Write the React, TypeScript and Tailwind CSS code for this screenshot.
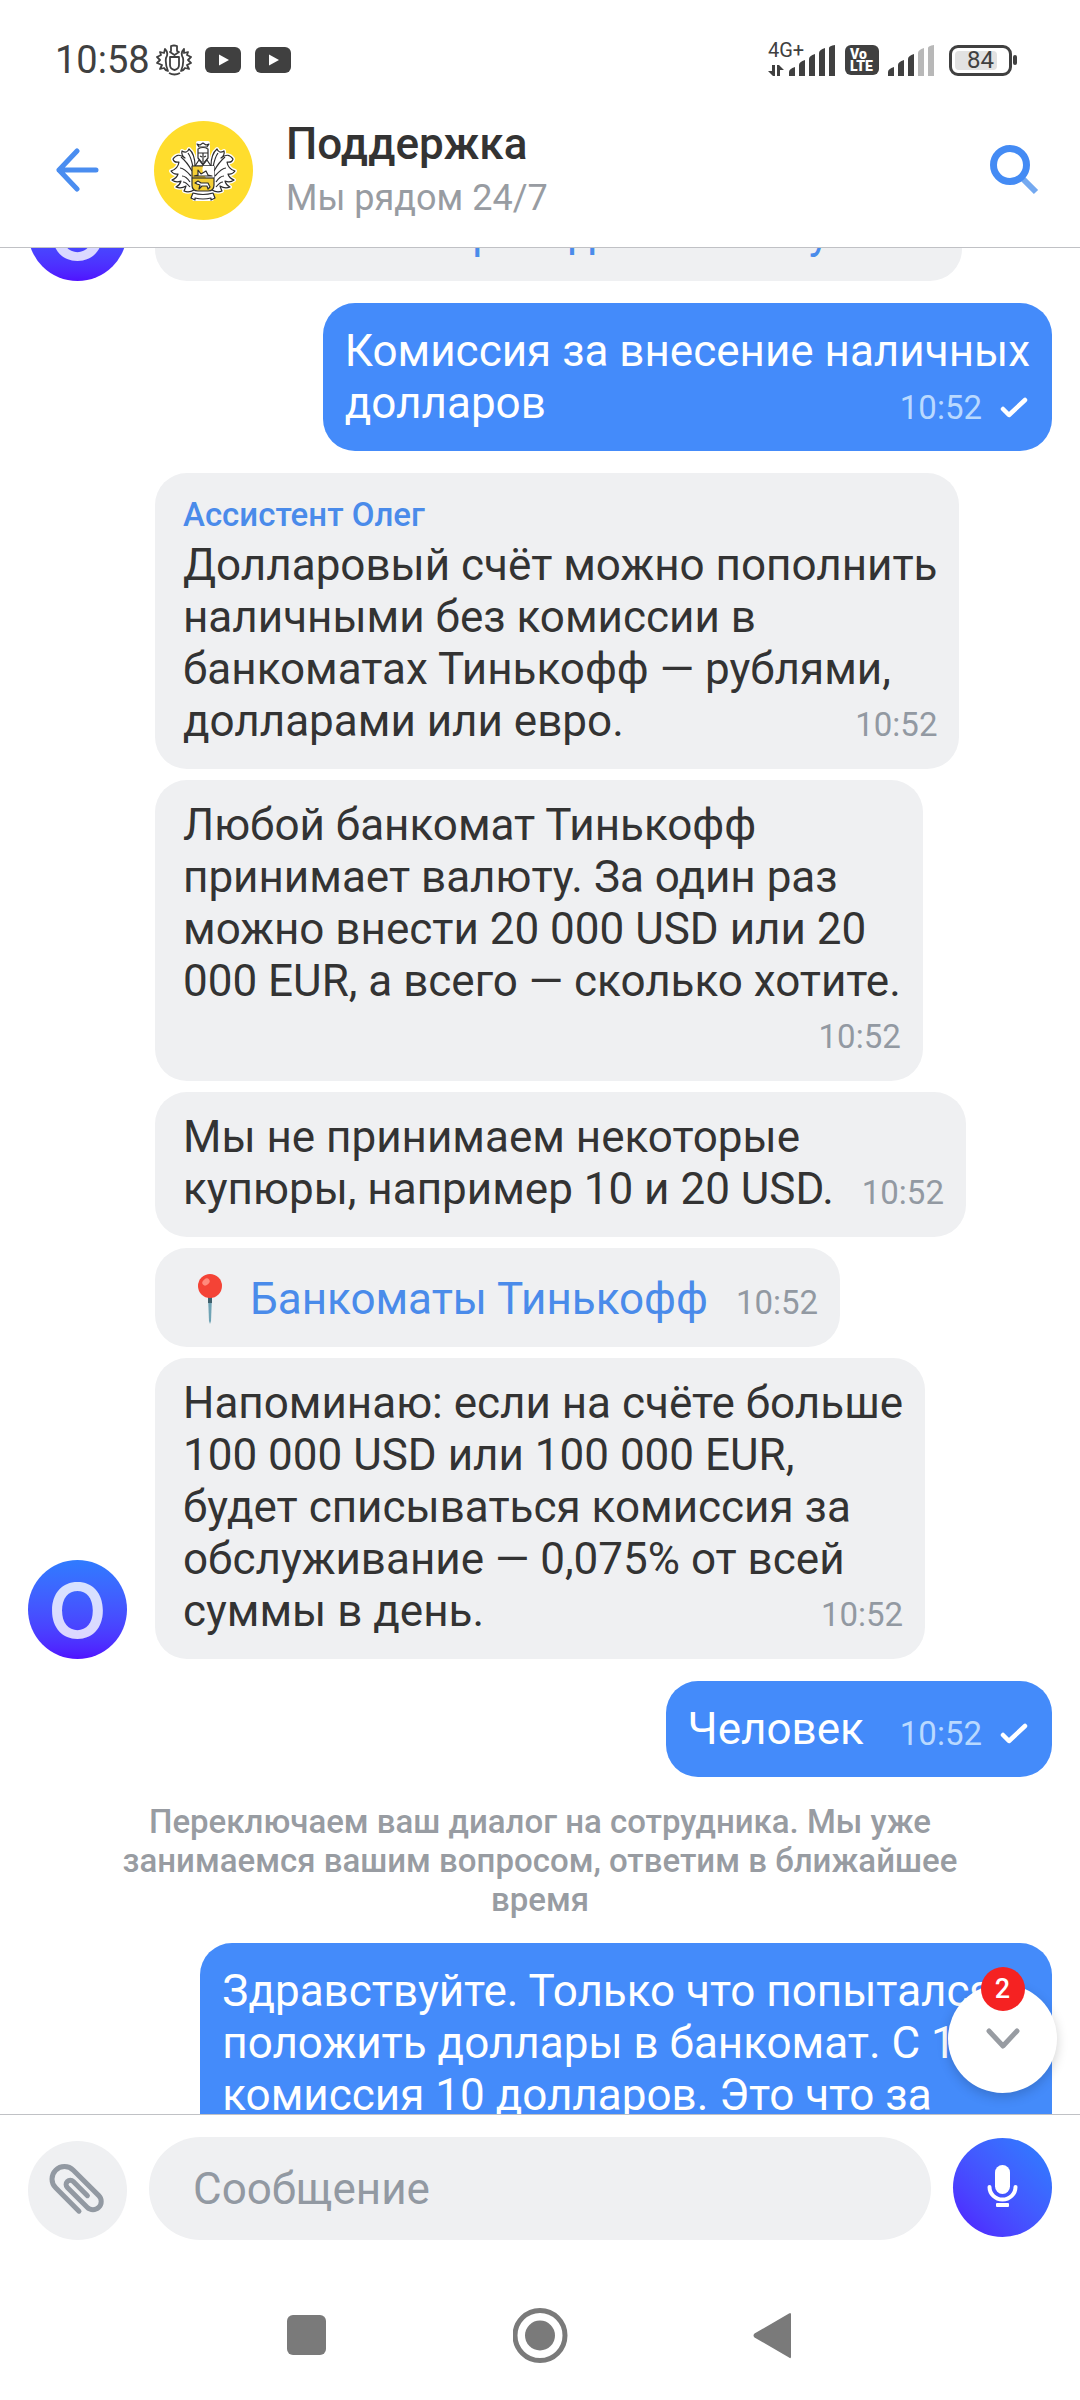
import type { ReactNode } from "react"

type Message = {
  id: string
  author?: string
  lines: string[]
  time: string
  link?: boolean
  pin?: boolean
  timeBelow?: boolean
}

const previousMessages: Message[] = [
  { id: "p1", lines: ["Как сейчас переводить валюту"], time: "10:51", link: true },
]

const assistantMessages: Message[] = [
  {
    id: "a1",
    author: "Ассистент Олег",
    lines: ["Долларовый счёт можно пополнить", "наличными без комиссии в", "банкоматах Тинькофф — рублями,", "долларами или евро."],
    time: "10:52",
  },
  {
    id: "a2",
    lines: ["Любой банкомат Тинькофф", "принимает валюту. За один раз", "можно внести 20 000 USD или 20", "000 EUR, а всего — сколько хотите."],
    time: "10:52",
    timeBelow: true,
  },
  { id: "a3", lines: ["Мы не принимаем некоторые", "купюры, например 10 и 20 USD."], time: "10:52" },
  { id: "a4", lines: ["Банкоматы Тинькофф"], time: "10:52", link: true, pin: true },
  {
    id: "a5",
    lines: ["Напоминаю: если на счёте больше", "100 000 USD или 100 000 EUR,", "будет списываться комиссия за", "обслуживание — 0,075% от всей", "суммы в день."],
    time: "10:52",
  },
]

function CoatOfArms() {
  const leaf =
    "M41 45 Q41 33 35 28 Q33 33 28 30 Q27 34 31 37 Q24 31 19 38 Q20 42 25 41 Q24 48 17 50 Q20 54 24 53 Q23 57 18 59 Q22 62 27 60 Q26 64 22 66 Q27 68 32 65 Q31 68 30 70 Q35 72 40 69 Z"
  const veins = "M39 46 Q37 36 34 32 M38 50 Q33 41 27 36 M37 55 Q30 47 26 47 M36 61 Q32 55 28 55 M36 66 Q32 61 29 61"
  return (
    <svg viewBox="0 0 99 99" className="size-[99px] shrink-0" role="img" aria-label="Тинькофф">
      <circle cx="49.500" cy="49.500" r="49.500" fill="#ffdd2d" />
      <g stroke="#fff" strokeWidth="4" strokeLinejoin="round" fill="#fff">
        <path d={leaf} />
        <path d={leaf} transform="translate(98 0) scale(-1 1)" />
        <path d="M44 22h10v22H44z M40 71h18v7H40z" />
      </g>
      <g stroke="#2d2d2d" strokeWidth="1.2" strokeLinejoin="round" fill="#fff">
        <path d={leaf} />
        <path d={veins} fill="none" />
        <g transform="translate(98 0) scale(-1 1)">
          <path d={leaf} />
          <path d={veins} fill="none" />
        </g>
        <path d="M45 26l-2-3 3 1 3-2 3 2 3-1-2 3z" />
        <path d="M44 28q5-3 10 0v9l-5 6-5-6z" />
        <path d="M44 32h10M49 32v9M46 35l2 1M52 35l-2 1" />
        <path d="M41 45l4-6 4 5 4-5 4 6z" fill="#fff" />
        <path d="M38 45h22v19q0 6-6 6H44q-6 0-6-6z" fill="#f5cf35" />
        <path d="M49 45h11v12H52q-5-6-3-12z" stroke="none" />
        <path d="M38 57h22" />
        <path d="M40 55l4-1v-5l3 4 5-3 2 4 4 1z" />
        <path d="M41 62l3-2 3 2h7l2 4-2 2-1-3h-5l-3 3 1-4-3-1z" />
        <path d="M39 72q10 3 20 0l2 5-4 2v-2q-8 2-16 0v2l-4-2z" />
      </g>
    </svg>
  )
}

function Tick() {
  return (
    <svg viewBox="0 0 30 22" className="h-[22px] w-[30px]" fill="none" stroke="#fff" strokeWidth="4.500" strokeLinecap="round" strokeLinejoin="round" aria-hidden="true">
      <path d="M3 12l6 6L25 3" />
    </svg>
  )
}

function Pin() {
  return (
    <svg viewBox="0 0 24 50" className="ml-[15px] h-[50px] w-6" role="img" aria-label="Метка">
      <path d="M10 22h4l-1 25-1 3-1-3z" fill="#6fa3b5" />
      <path d="M10 22h4v7h-4z" fill="#40606c" />
      <circle cx="12" cy="12" r="12" fill="#f44336" />
      <ellipse cx="8" cy="8" rx="4" ry="3" fill="#ff8a7c" transform="rotate(-40 8 8)" />
    </svg>
  )
}

function Avatar() {
  return (
    <div className="flex size-[99px] shrink-0 items-center justify-center rounded-full bg-linear-to-b from-[#2f7bff] to-[#5010ff] font-[Inter,sans-serif] text-[76px] leading-none font-semibold text-white/80">
      O
    </div>
  )
}

function IncomingBubble({ message }: { message: Message }) {
  const { author, lines, time, link, pin, timeBelow } = message
  const head = lines.slice(0, -1)
  const last = lines[lines.length - 1]
  const padding = author ? "pt-[22px]" : pin ? "pt-[25px]" : "pt-[19px]"
  const stamp = <time className="text-[33px] leading-[44px] text-[#9299a2]">{time}</time>

  return (
    <article className={`w-fit rounded-[32px] bg-[#eff0f2] pr-[22px] pb-[22px] pl-[28px] text-[44px] leading-[52px] whitespace-nowrap text-[#333] ${padding}`}>
      {author && <h2 className="mb-1 text-[33px] leading-[40px] font-medium text-[#4a8bea]">{author}</h2>}
      {head.map((line) => (
        <p key={line}>{line}</p>
      ))}
      {timeBelow ? (
        <>
          <p>{last}</p>
          <p className="text-right">{stamp}</p>
        </>
      ) : (
        <div className="flex h-[52px] items-baseline justify-between gap-[28px]">
          {link ? (
            <a href="#atm" className="flex h-[52px] items-baseline text-[#4a8bea]">
              {pin && (
                <span className="mr-[28px] self-center">
                  <Pin />
                </span>
              )}
              {last}
            </a>
          ) : (
            <p>{last}</p>
          )}
          {stamp}
        </div>
      )}
    </article>
  )
}

function IncomingGroup({ messages }: { messages: Message[] }) {
  return (
    <section className="flex items-end gap-[28px]">
      <Avatar />
      <div className="flex flex-col gap-[11px]">
        {messages.map((message) => (
          <IncomingBubble key={message.id} message={message} />
        ))}
      </div>
    </section>
  )
}

function OutgoingBubble({ lines, time }: { lines: string[]; time?: string }) {
  return (
    <article className="w-fit self-end rounded-[32px] bg-[#448bfa] px-[22px] py-[22px] text-[44px] leading-[52px] whitespace-nowrap text-white">
      {lines.slice(0, -1).map((line) => (
        <p key={line}>{line}</p>
      ))}
      <div className="flex items-end justify-between gap-[36px]">
        <p>{lines[lines.length - 1]}</p>
        {time && (
          <span className="flex items-center gap-[18px]">
            <time className="text-[33px] leading-[42px] text-[#b9d9ff]">{time}</time>
            <Tick />
          </span>
        )}
      </div>
    </article>
  )
}

function Signal({ bars }: { bars: number }) {
  const shapes = ["M0 31v-4q0-3 6-5v9z", "M10 31V20q0-3 6-5v16z", "M20 31V14q0-3 6-5v22z", "M30 31V8q0-3 6-5v28z", "M40 31V3q0-2 6-3v31z"]
  return (
    <svg viewBox="0 0 47 31" className="h-[31px] w-[47px]" aria-hidden="true">
      {shapes.map((d, i) => (
        <path key={d} d={d} fill={i < bars ? "#404040" : "#b8b8b8"} />
      ))}
    </svg>
  )
}

function YoutubeBadge() {
  return (
    <svg viewBox="0 0 36 26" className="h-[26px] w-9" aria-hidden="true">
      <rect width="36" height="26" rx="6" fill="#404040" />
      <path d="M14 7.500l10 5.500-10 5.500z" fill="#fff" />
    </svg>
  )
}

function StatusBar() {
  return (
    <div className="flex h-12 items-center justify-between pr-[63px] pl-[55px] text-[#404040]">
      <div className="flex items-center">
        <span className="text-[38px] leading-[48px]">10:58</span>
        <svg viewBox="0 0 36 32" className="ml-[6px] h-8 w-9" fill="none" stroke="#404040" strokeWidth="1.800" strokeLinejoin="round" aria-hidden="true">
          <path d="M14 13h9v8q0 4-4.500 5Q14 25 14 21z" />
          <path d="M15 2q3-1 6 0v5l2 1-4.500 3L14 8l1-1z" />
          <path d="M9 5q4 4 1 9-1 6 2 13-3-1-4-3l-4 1 2-4-5-2 3-3-3-3 4-2-1-3 4 1z" />
          <path d="M28 5q-4 4-1 9 1 6-2 13 3-1 4-3l4 1-2-4 4-2-3-3 3-3-4-2 1-3-4 1z" />
          <path d="M13 29q5.500 3 11 0" />
        </svg>
        <div className="ml-[13px] flex gap-[14px]">
          <YoutubeBadge />
          <YoutubeBadge />
        </div>
      </div>

      <div className="flex items-center">
        <div className="relative flex h-[31px] items-end">
          <svg viewBox="0 0 16 11" className="mr-[5px] h-[11px] w-4" fill="#404040" aria-hidden="true">
            <path d="M4 0h3v11H5L0 6h4z M9 0h2l5 5h-4v6H9z" />
          </svg>
          <span className="absolute -top-[6px] left-0 text-[20px] leading-[22px]">4G+</span>
          <Signal bars={5} />
        </div>
        <div className="ml-[9px] flex h-[30px] w-[34px] flex-col justify-center rounded-[6px] bg-[#404040] pl-[5px] text-[14px] leading-[12px] font-black text-white">
          <span>Vo</span>
          <span>LTE</span>
        </div>
        <div className="ml-[9px]">
          <Signal bars={3} />
        </div>
        <div className="ml-[14px] flex h-[31px] w-[63px] rounded-[9px] border-3 border-[#404040] p-[3px]">
          <div className="flex w-[42px] items-center justify-end rounded-[4px] bg-[#e2e2e2]">
            <span className="mr-[3px] text-[24px] leading-none">84</span>
          </div>
        </div>
        <div className="ml-px h-[10px] w-1 rounded-[2px] bg-[#404040]" />
      </div>
    </div>
  )
}

function NavButton({ label, children }: { label: string; children: ReactNode }) {
  return (
    <button type="button" aria-label={label} className="size-[55px]">
      <svg viewBox="0 0 55 55" className="size-[55px]" fill="#7a7a7a">
        {children}
      </svg>
    </button>
  )
}

export default function App() {
  return (
    <div className="flex h-screen flex-col bg-white font-[Roboto,sans-serif]">
      <header className="shrink-0 border-b border-[#c0c1c5] pt-[36px]">
        <StatusBar />
        <div className="flex items-center pt-[34px] pr-[40px] pb-[25px] pl-[56px]">
          <button type="button" aria-label="Назад" className="mr-[54px]">
            <svg viewBox="0 0 44 44" className="size-11" fill="none" stroke="#4a8df0" strokeWidth="5" strokeLinecap="round" strokeLinejoin="round">
              <path d="M40 22H3M21 3L3 22l18 19" />
            </svg>
          </button>
          <CoatOfArms />
          <div className="ml-[33px] flex-1">
            <h1 className="text-[44px] leading-[52px] font-medium text-[#333]">Поддержка</h1>
            <p className="mt-1 text-[36px] leading-[48px] text-[#989ca2]">Мы рядом 24/7</p>
          </div>
          <button type="button" aria-label="Поиск">
            <svg viewBox="0 0 50 50" className="size-[50px]" fill="none">
              <path d="M33 34l13 13" stroke="#74a9f0" strokeWidth="6" />
              <circle cx="20" cy="20" r="16.500" stroke="#448bf4" strokeWidth="7" />
            </svg>
          </button>
        </div>
      </header>

      <main className="relative min-h-0 flex-1 overflow-hidden">
        <div className="-mt-[66px] flex flex-col gap-[22px] px-[28px]">
          <IncomingGroup messages={previousMessages} />
          <OutgoingBubble lines={["Комиссия за внесение наличных", "долларов"]} time="10:52" />
          <IncomingGroup messages={assistantMessages} />
          <OutgoingBubble lines={["Человек"]} time="10:52" />
          <p className="mx-auto max-w-[860px] pt-[3px] pb-0.5 text-center text-[33px] leading-[39px] font-medium text-[#989ca2]">
            Переключаем ваш диалог на сотрудника. Мы уже занимаемся вашим вопросом, ответим в ближайшее время
          </p>
          <OutgoingBubble lines={["Здравствуйте. Только что попытался", "положить доллары в банкомат. С 1000", "комиссия 10 долларов. Это что за", "комиссия?"]} />
        </div>

        <button type="button" aria-label="К последним сообщениям" className="absolute right-[23px] bottom-[21px] flex size-[109px] items-center justify-center rounded-full bg-white shadow-[0_4px_12px_rgba(0,0,0,0.18)]">
          <svg viewBox="0 0 36 22" className="h-[22px] w-9" fill="none" stroke="#989ca2" strokeWidth="5" strokeLinecap="round" strokeLinejoin="round">
            <path d="M4 3l14 15L32 3" />
          </svg>
          <span className="absolute -top-[17px] flex size-11 items-center justify-center rounded-full bg-[#f52222] text-[27px] leading-none font-medium text-white">2</span>
        </button>
      </main>

      <form className="flex shrink-0 items-end gap-[22px] border-t border-[#c0c1c5] px-[28px] pt-[22px]">
        <button type="button" aria-label="Прикрепить файл" className="shrink-0 rounded-full bg-[#eff0f2]">
          <svg viewBox="0 0 99 99" className="size-[99px]" fill="none" stroke="#9299a2" strokeWidth="5" strokeLinecap="round">
            <path d="M-12.500 33V0A12.500 12.500 0 0 1 12.500 0V36A8.250 8.250 0 0 1-4 36V8A4.200 4.200 0 0 1 4.400 8V28" transform="translate(36.500 38) rotate(-45)" />
          </svg>
        </button>
        <input type="text" aria-label="Сообщение" placeholder="Сообщение" className="h-[103px] min-w-0 flex-1 rounded-full bg-[#eff0f2] px-[44px] text-[44px] leading-[52px] text-[#333] placeholder:text-[#9299a2]" />
        <button type="button" aria-label="Голосовое сообщение" className="mb-[3px] shrink-0 rounded-full bg-linear-to-bl from-[#2a80ff] to-[#5010ff]">
          <svg viewBox="0 0 99 99" className="size-[99px]">
            <rect x="42" y="27" width="15" height="29" rx="7.500" fill="#fff" />
            <path d="M36.500 49a13 12.500 0 0 0 26 0" fill="none" stroke="#fff" strokeWidth="4" strokeLinecap="round" />
            <rect x="43" y="65" width="13" height="4" rx="1" fill="#fff" />
          </svg>
        </button>
      </form>

      <nav className="flex shrink-0 justify-center gap-[178px] pt-[68px] pb-[37px]">
        <NavButton label="Недавние">
          <rect x="7" y="7" width="39" height="40" rx="6" />
        </NavButton>
        <NavButton label="Домой">
          <circle cx="27" cy="27.500" r="25" fill="none" stroke="#7a7a7a" strokeWidth="5" />
          <circle cx="27" cy="27.500" r="15" />
        </NavButton>
        <NavButton label="Назад">
          <path d="M43 5.500q2-1.500 2 1v42q0 3-2 1L8.500 29.500q-2-2 0-4z" />
        </NavButton>
      </nav>
    </div>
  )
}
